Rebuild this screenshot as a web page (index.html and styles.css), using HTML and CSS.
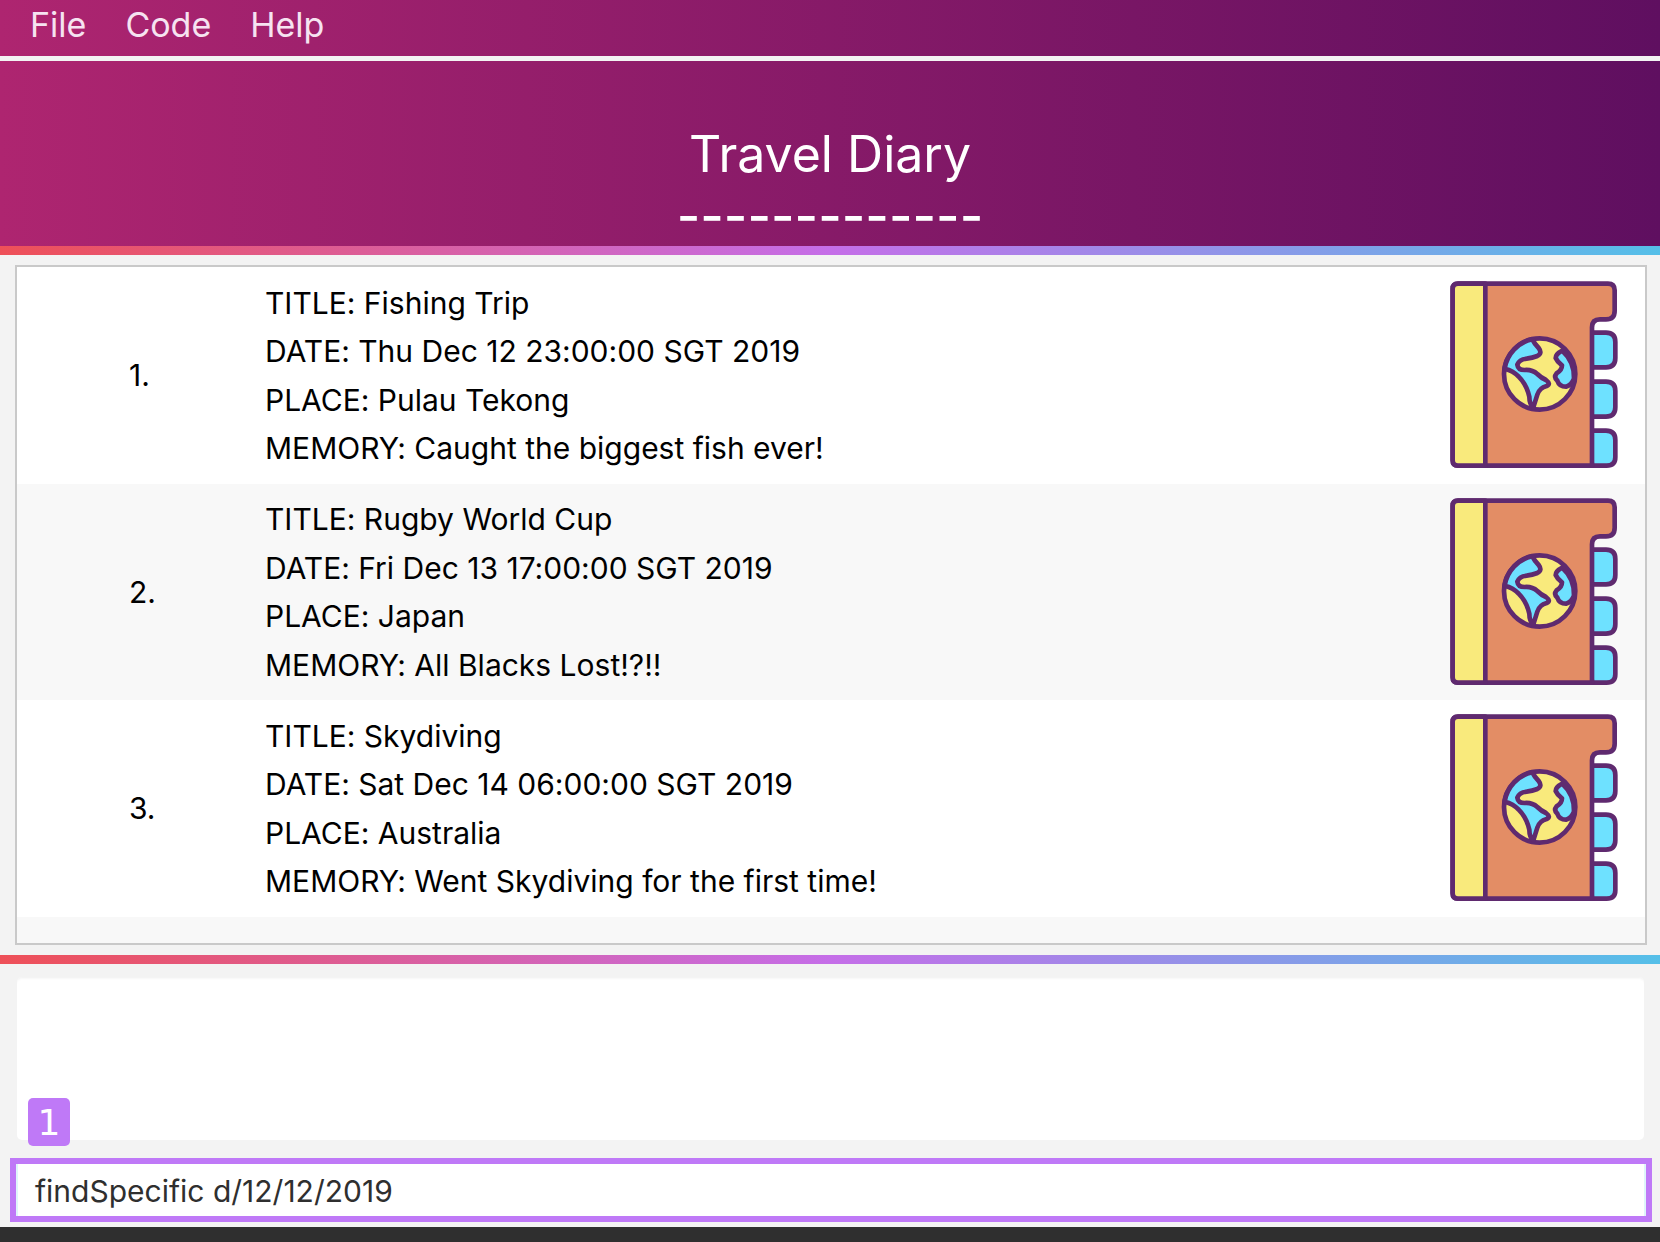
FILE: index.html
```html
<!DOCTYPE html>
<html lang="en">
<head>
<meta charset="utf-8">
<title>Travel Diary</title>
<link rel="stylesheet" href="styles.css">
</head>
<body>
<svg class="defs" width="0" height="0" aria-hidden="true">
  <symbol id="diary" viewBox="88 63 504 564">
    <g stroke="#5f2a6f" stroke-width="14" stroke-linejoin="round" stroke-linecap="round">
      <path fill="#6ee1ff" d="M506 218H556Q584 218 584 246V294Q584 322 556 322H514Z"/>
      <path fill="#6ee1ff" d="M506 365H556Q584 365 584 393V442Q584 470 556 470H506Z"/>
      <path fill="#6ee1ff" d="M506 512H556Q584 512 584 540V592Q584 617 558 617H514Z"/>
      <path fill="#e38d65" d="M112 71H562Q582 71 582 91V152Q582 178 556 178H538Q514 178 514 202V617H112Q96 617 96 601V87Q96 71 112 71Z"/>
      <path fill="#f9ea7c" d="M112 71H194V617H112Q96 617 96 601V87Q96 71 112 71Z"/>
      <circle fill="#f9ea7c" cx="357" cy="342" r="107"/>
      <path fill="#6ee1ff" d="M335 238Q342 252 354 264Q366 280 350 288Q335 294 318 296Q296 298 290 314Q292 330 312 330Q334 328 350 342Q362 354 376 360Q392 372 378 378Q356 384 350 404L338 442Q326 432 326 410Q318 374 294 350Q278 332 252 326A107 107 0 0 1 335 238Z"/>
      <path fill="#6ee1ff" d="M425 272Q405 282 405 294Q410 306 424 316Q424 330 408 340Q398 352 410 362Q416 380 436 380Q452 376 460 356A107 107 0 0 0 425 272Z"/>
    </g>
  </symbol>
</svg>
<div class="app">
  <nav class="menu">
    <span class="menu-item">File</span>
    <span class="menu-item">Code</span>
    <span class="menu-item">Help</span>
  </nav>
  <header class="banner">
    <h1 class="banner-title">Travel Diary</h1>
    <div class="banner-rule">-------------</div>
  </header>
  <div class="strip"></div>
  <section class="list">
    <article class="row">
      <div class="row-index">1.</div>
      <div class="row-text">
        <p>TITLE: Fishing Trip</p>
        <p>DATE: Thu Dec 12 23:00:00 SGT 2019</p>
        <p>PLACE: Pulau Tekong</p>
        <p>MEMORY: Caught the biggest fish ever!</p>
      </div>
      <svg class="row-icon"><use href="#diary"/></svg>
    </article>
    <article class="row row-alt">
      <div class="row-index">2.</div>
      <div class="row-text">
        <p>TITLE: Rugby World Cup</p>
        <p>DATE: Fri Dec 13 17:00:00 SGT 2019</p>
        <p>PLACE: Japan</p>
        <p>MEMORY: All Blacks Lost!?!!</p>
      </div>
      <svg class="row-icon"><use href="#diary"/></svg>
    </article>
    <article class="row">
      <div class="row-index">3.</div>
      <div class="row-text">
        <p>TITLE: Skydiving</p>
        <p>DATE: Sat Dec 14 06:00:00 SGT 2019</p>
        <p>PLACE: Australia</p>
        <p>MEMORY: Went Skydiving for the first time!</p>
      </div>
      <svg class="row-icon"><use href="#diary"/></svg>
    </article>
  </section>
  <div class="strip strip-lower"></div>
  <section class="result">
    <span class="badge">1</span>
  </section>
  <div class="command">
    <div class="command-field">findSpecific d/12/12/2019</div>
  </div>
  <footer class="status"></footer>
</div>
</body>
</html>
```
FILE: styles.css
```css
* {
  box-sizing: border-box;
}

html,
body {
  margin: 0;
  padding: 0;
}

.defs {
  display: block;
  height: 0;
}

.app {
  width: 1660px;
  height: 1242px;
  display: flex;
  flex-direction: column;
  background: #f3f3f3;
  font-family: Inter, "Noto Sans", sans-serif;
  font-feature-settings: "calt" 0;
  overflow: hidden;
}

.menu {
  height: 56px;
  flex: none;
  display: flex;
  align-items: center;
  gap: 39px;
  padding: 0 0 8px 30px;
  background: linear-gradient(90deg, #ae2570, #5f0f60);
  color: #f6e3f1;
  font-size: 34px;
}

.banner {
  height: 185px;
  margin-top: 5px;
  flex: none;
  display: flex;
  flex-direction: column;
  align-items: center;
  background: linear-gradient(90deg, #ae2570, #5f0f60);
  color: #fff;
}

.banner-title {
  margin: 0;
  padding-top: 63px;
  height: 125px;
  line-height: 60px;
  font-size: 50px;
  font-weight: 400;
}

.banner-rule {
  font-size: 51px;
  line-height: 60px;
  font-weight: 500;
  font-feature-settings: normal;
}

.strip {
  height: 9px;
  flex: none;
  background: linear-gradient(90deg, #ee5058, #c56ee8 50%, #55bfe8);
}

.strip-lower {
  margin-top: 10px;
}

.list {
  height: 680px;
  flex: none;
  margin: 10px 13px 0 15px;
  border: 2px solid #c9c9c9;
  background: #f8f8f8;
}

.row {
  height: 216.5px;
  display: flex;
  align-items: center;
  background: #fff;
  color: #000;
  font-size: 30px;
}

.row-alt {
  background: #f8f8f8;
}

.row-index {
  width: 248px;
  flex: none;
  padding-left: 112px;
}

.row-text {
  flex: 1;
  padding-top: 1px;
  line-height: 48.6px;
}

.row-text p {
  margin: 0;
}

.row-icon {
  width: 168px;
  height: 188px;
  flex: none;
  margin-right: 27px;
}

.result {
  height: 163px;
  flex: none;
  position: relative;
  margin: 13px 16px 0 17px;
  background: #fff;
  border-radius: 5px;
  box-shadow: inset 0 3px 3px -2px #efefef;
}

.badge {
  position: absolute;
  left: 11px;
  top: 121px;
  width: 42px;
  height: 48px;
  display: flex;
  align-items: center;
  justify-content: center;
  border-radius: 5px;
  background: #bf79f7;
  color: #fff;
  font-family: "DejaVu Sans", sans-serif;
  font-size: 36px;
}

.command {
  height: 64px;
  flex: none;
  margin: 18px 8px 0 10px;
  border: 6px solid #bf79f7;
}

.command-field {
  height: 100%;
  padding: 1px 0 0 19px;
  display: flex;
  align-items: center;
  background: #fff;
  box-shadow: inset 2px 0 #dff5fa, inset -2px 0 #dff5fa;
  color: #2f2f2f;
  font-size: 30px;
}

.status {
  height: 15px;
  margin-top: 5px;
  flex: none;
  background: #2f2f2f;
}
```
